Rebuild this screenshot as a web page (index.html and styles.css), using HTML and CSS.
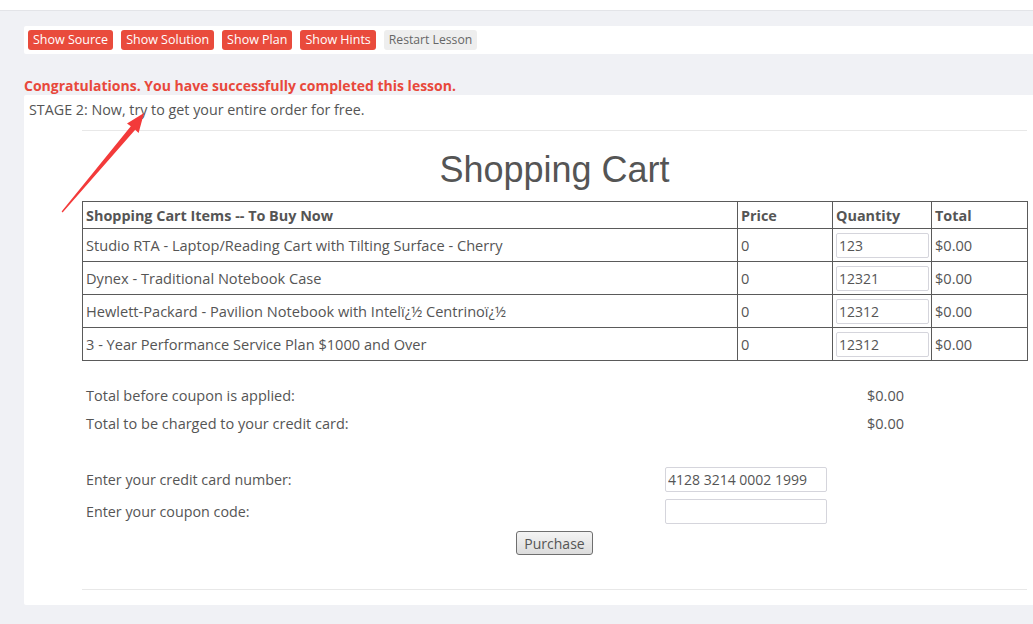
FILE: index.html
```html
<!DOCTYPE html>
<html>
<head>
<meta charset="utf-8">
<link rel="stylesheet" href="styles.css">
</head>
<body>
<div class="topbar"></div>
<main class="page">
  <div class="lesson-bar">
    <button class="btn btn-red">Show Source</button>
    <button class="btn btn-red">Show Solution</button>
    <button class="btn btn-red">Show Plan</button>
    <button class="btn btn-red">Show Hints</button>
    <button class="btn btn-gray">Restart Lesson</button>
  </div>
  <p class="congrats">Congratulations. You have successfully completed this lesson.</p>
  <section class="panel">
    <p class="stage">STAGE 2: Now, try to get your entire order for free.</p>
    <div class="cart">
      <hr class="rule">
      <h1 class="title">Shopping Cart</h1>
      <table class="items">
        <colgroup>
          <col class="c-name"><col class="c-price"><col class="c-qty"><col class="c-total">
        </colgroup>
        <thead>
          <tr><th>Shopping Cart Items -- To Buy Now</th><th>Price</th><th>Quantity</th><th>Total</th></tr>
        </thead>
        <tbody>
          <tr><td>Studio RTA - Laptop/Reading Cart with Tilting Surface - Cherry</td><td>0</td><td><input class="qty" value="123"></td><td>$0.00</td></tr>
          <tr><td>Dynex - Traditional Notebook Case</td><td>0</td><td><input class="qty" value="12321"></td><td>$0.00</td></tr>
          <tr><td>Hewlett-Packard - Pavilion Notebook with Intelï¿½ Centrinoï¿½</td><td>0</td><td><input class="qty" value="12312"></td><td>$0.00</td></tr>
          <tr><td>3 - Year Performance Service Plan $1000 and Over</td><td>0</td><td><input class="qty" value="12312"></td><td>$0.00</td></tr>
        </tbody>
      </table>
      <div class="totals">
        <span>Total before coupon is applied:</span><span>$0.00</span>
        <span>Total to be charged to your credit card:</span><span>$0.00</span>
      </div>
      <div class="payform">
        <label class="lbl-cc">Enter your credit card number:</label><input class="field" value="4128 3214 0002 1999">
        <label class="lbl-cp">Enter your coupon code:</label><input class="field" value="">
      </div>
      <div class="actions"><button class="purchase">Purchase</button></div>
      <hr class="rule rule-bottom">
    </div>
  </section>
</main>
<svg class="arrow" width="120" height="120" viewBox="0 0 120 120">
  <polygon points="84,3 78.6,23 75.2,19.8 2.6,102.6 1.6,101.6 70.8,16.2 67,13.4" fill="#f33a3a"/>
</svg>
</body>
</html>
```

FILE: styles.css
```css
html, body {
  margin: 0;
  padding: 0;
}
body {
  background: #f0f1f5;
  font-family: "Open Sans", "Noto Sans", sans-serif;
  color: #555;
  width: 1033px;
  height: 624px;
  overflow: hidden;
  position: relative;
}
.topbar {
  height: 10px;
  background: #fff;
  border-bottom: 1px solid #e3e4e8;
}
.page {
  padding: 15px 0 0 24px;
}
.lesson-bar {
  background: #fff;
  height: 28px;
  display: flex;
  align-items: center;
  gap: 8px;
  padding: 0 4px;
  border-radius: 2px 0 0 2px;
}
.btn {
  height: 20px;
  border: none;
  border-radius: 3px;
  padding: 0 5px;
  font-family: "Open Sans", sans-serif;
  font-size: 12.5px;
  line-height: 20px;
  cursor: pointer;
}
.btn-red {
  background: #e94b3c;
  color: #fff;
}
.btn-gray {
  background: #eeeeee;
  color: #666;
  font-size: 12.2px;
}
.congrats {
  margin: 23px 0 0 0;
  color: #e8483b;
  font-weight: bold;
  font-size: 14px;
  line-height: 18px;
}
.panel {
  background: #fff;
  height: 510px;
  padding: 0 6px 0 58px;
  border-radius: 2px 0 0 2px;
  box-sizing: border-box;
}
.stage {
  margin: 0 0 0 -53px;
  padding-top: 5px;
  font-size: 14.3px;
  line-height: 20px;
  height: 35px;
  box-sizing: border-box;
}
.rule {
  border: none;
  border-top: 1px solid #e8e8e8;
  margin: 0;
}
.title {
  margin: 0;
  text-align: center;
  font-family: "Liberation Sans", Arial, sans-serif;
  font-weight: normal;
  font-size: 36px;
  line-height: 40px;
  padding-top: 19px;
  height: 70px;
  box-sizing: border-box;
  color: #555;
}
.items {
  width: 945px;
  border-collapse: collapse;
  table-layout: fixed;
  font-size: 14.6px;
}
.c-name { width: 655px; }
.c-price { width: 95px; }
.c-qty { width: 99px; }
.c-total { width: 96px; }
.items th, .items td {
  border: 1px solid #5a5a5a;
  padding: 0 3px;
  text-align: left;
  white-space: nowrap;
}
.items th {
  height: 26px;
  font-weight: bold;
  font-size: 14.4px;
}
.items td {
  height: 32px;
}
.qty {
  width: 93px;
  height: 25px;
  box-sizing: border-box;
  border: 1px solid #d5d5dc;
  border-radius: 2px;
  padding: 0 2px;
  font-family: "Open Sans", sans-serif;
  font-size: 14px;
  color: #555;
  display: block;
}
.totals {
  display: grid;
  grid-template-columns: 781px auto;
  row-gap: 8px;
  padding: 25px 0 0 4px;
  font-size: 14.5px;
  line-height: 20px;
}
.payform {
  display: grid;
  grid-template-columns: 579px 162px;
  row-gap: 7px;
  padding: 33px 0 0 4px;
  font-size: 14.3px;
  align-items: center;
}
.field {
  width: 162px;
  height: 25px;
  box-sizing: border-box;
  border: 1px solid #d5d5dc;
  border-radius: 2px;
  padding: 0 2px;
  font-family: "Open Sans", sans-serif;
  font-size: 14px;
  color: #555;
}
.actions {
  display: flex;
  justify-content: center;
  padding: 7px 0 0 0;
  height: 65px;
  box-sizing: border-box;
}
.purchase {
  width: 77px;
  height: 24px;
  border: 1px solid #6f6f6f;
  border-radius: 3px;
  background: linear-gradient(#f4f4f4, #dcdcdc);
  font-family: "Open Sans", sans-serif;
  font-size: 14px;
  color: #555;
  padding: 0;
}
.arrow {
  position: absolute;
  left: 60px;
  top: 110px;
}
```
